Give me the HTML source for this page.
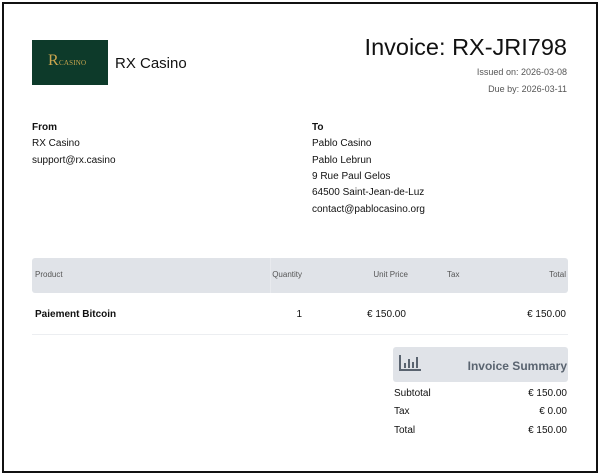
<!DOCTYPE html>
<html><head><meta charset="utf-8"><style>
*{margin:0;padding:0;box-sizing:border-box}
body{width:600px;height:475px;background:#fff;font-family:"Liberation Sans",sans-serif;color:#111;position:relative;overflow:hidden}
.frame{position:absolute;left:2px;top:2px;width:596px;height:471px;border:2px solid #111}
.a{position:absolute;white-space:nowrap}
.s{font-size:10px}
.g{color:#555}
</style></head><body>
<div class="frame"></div>
<div class="a" style="left:32px;top:40px;width:76px;height:45px;background:#0d3a2a;color:#c9a54e;font-family:'Liberation Serif',serif;">
<span class="a" style="left:16px;top:12px;font-size:16px">R</span><span class="a" style="left:27px;top:19px;font-size:7px;letter-spacing:.2px">CASINO</span></div>
<div class="a" style="left:115px;top:55px;font-size:15px">RX Casino</div>
<div class="a" style="right:33px;top:34px;font-size:23.5px">Invoice: RX-JRI798</div>
<div class="a g" style="right:33px;top:67px;font-size:9px">Issued on: 2026-03-08</div>
<div class="a g" style="right:33px;top:84px;font-size:9px">Due by: 2026-03-11</div>
<div class="a s" style="left:32px;top:122px;font-weight:bold">From</div>
<div class="a s" style="left:32px;top:138px">RX Casino</div>
<div class="a s" style="left:32px;top:155px">support@rx.casino</div>
<div class="a s" style="left:312px;top:122px;font-weight:bold">To</div>
<div class="a s" style="left:312px;top:138px">Pablo Casino</div>
<div class="a s" style="left:312px;top:155px">Pablo Lebrun</div>
<div class="a s" style="left:312px;top:171px">9 Rue Paul Gelos</div>
<div class="a s" style="left:312px;top:187px">64500 Saint-Jean-de-Luz</div>
<div class="a s" style="left:312px;top:204px">contact@pablocasino.org</div>
<div class="a" style="left:32px;top:258px;width:536px;height:35px;background:#e0e3e8;border-radius:3px"></div>
<div class="a" style="left:270px;top:258px;width:1px;height:35px;background:#e8eaee"></div>
<div class="a g" style="left:35px;top:270px;font-size:8px">Product</div>
<div class="a g" style="right:298px;top:270px;font-size:8px">Quantity</div>
<div class="a g" style="right:192px;top:270px;font-size:8px">Unit Price</div>
<div class="a g" style="left:447px;top:270px;font-size:8px">Tax</div>
<div class="a g" style="right:34px;top:270px;font-size:8px">Total</div>
<div class="a s" style="left:35px;top:309px;font-weight:bold">Paiement Bitcoin</div>
<div class="a s" style="right:298px;top:309px">1</div>
<div class="a s" style="left:367px;top:309px">€ 150.00</div>
<div class="a s" style="right:34px;top:309px">€ 150.00</div>
<div class="a" style="left:32px;top:334px;width:536px;height:1px;background:#eceef1"></div>
<div class="a" style="left:393px;top:347px;width:175px;height:35px;background:#e0e3e8;border-radius:3px"></div>
<svg class="a" style="left:399px;top:355px" width="22" height="16" viewBox="0 0 22 16"><g fill="#5a6470"><rect x="0" y="0" width="2" height="16"/><rect x="0" y="14" width="22" height="2"/><rect x="5" y="8" width="2" height="5"/><rect x="9" y="4" width="2" height="9"/><rect x="13" y="7" width="2" height="6"/><rect x="17" y="2" width="2" height="11"/></g></svg>
<div class="a" style="right:33px;top:359px;font-size:12px;font-weight:bold;color:#5a6470">Invoice Summary</div>
<div class="a s" style="left:394px;top:388px">Subtotal</div>
<div class="a s" style="right:33px;top:388px">€ 150.00</div>
<div class="a s" style="left:394px;top:406px">Tax</div>
<div class="a s" style="right:33px;top:406px">€ 0.00</div>
<div class="a s" style="left:394px;top:425px">Total</div>
<div class="a s" style="right:33px;top:425px">€ 150.00</div>
</body></html>
